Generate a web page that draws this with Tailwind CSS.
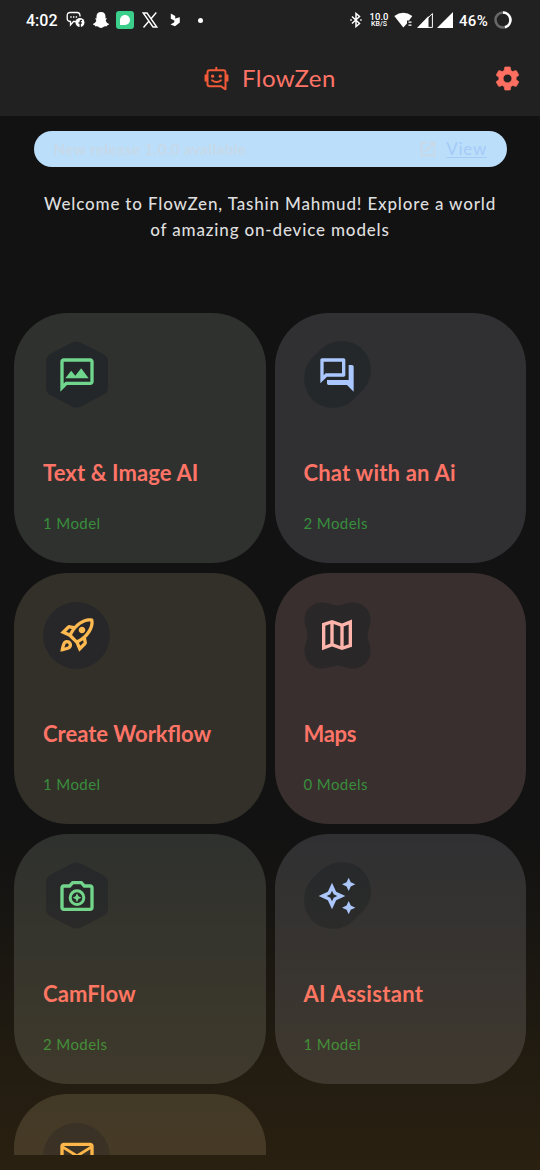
<!DOCTYPE html>
<html lang="en">
<head>
<meta charset="utf-8">
<meta name="viewport" content="width=device-width, initial-scale=1">
<title>FlowZen</title>
<script src="https://cdn.jsdelivr.net/npm/@tailwindcss/browser@4"></script>
</head>
<body class="bg-[#121212] font-[Lato,sans-serif]">
<svg width="0" height="0" class="absolute">
  <defs>
    <symbol id="hex" viewBox="0 0 67 67"><path d="M28 2.200Q33.500-1.400 39 2.200L60 13Q65 15.500 65 20V47Q65 51.500 60 54L39 65Q33.500 68 28 65L7 54Q3 51.500 3 47V20Q3 15.500 7 13Z"/></symbol>
    <symbol id="oval" viewBox="0 0 67 67"><path d="M16 9C23 2.500 30 .2 38 .2C55 .2 66.800 13 66.800 29C66.800 37 64 44 58 50L50 58C44 64 37 66.800 29 66.800C12 66.800 .2 54 .2 38C.2 29 3 22 9 16Z"/></symbol>
    <symbol id="disc" viewBox="0 0 67 67"><circle cx="33.500" cy="33.500" r="33.400"/></symbol>
    <symbol id="clover" viewBox="0 0 67 67"><path d="M18 .5C25 .5 28 3.500 33.500 3.500S42 .5 49 .5C59 .5 66.500 8 66.500 18C66.500 25 63.500 28 63.500 33.500S66.500 42 66.500 49C66.500 59 59 66.500 49 66.500C42 66.500 39 63.500 33.500 63.500S25 66.500 18 66.500C8 66.500 .5 59 .5 49C.5 42 3.500 39 3.500 33.500S.5 25 .5 18C.5 8 8 .5 18 .5Z"/></symbol>
  </defs>
</svg>
<div class="relative flex h-[1170px] w-[540px] flex-col overflow-hidden">
  <header class="flex h-[116px] shrink-0 flex-col bg-[#212121]">
    <div class="flex h-10 items-center pl-[26px] pr-[29px] font-[Roboto,sans-serif] text-white">
      <span class="w-[40px] pt-[2px] text-[16px] font-medium leading-none">4:02</span>
      <svg class="h-[18px] w-[19px] shrink-0" viewBox="0 0 19 18" fill="none" stroke="#fff" stroke-width="1.300"><path d="M10 10.500H7.500L4.500 14V10.500H4Q1.200 10.300 1.200 7.500V4.500Q1.200 1.500 4.200 1.500H11Q14 1.500 14 4.800V5.500"/><path d="M4.300 6h1.400M7 6h1.400M9.700 6h1.400" stroke-width="1.500"/><circle cx="14" cy="11.500" r="4.500" fill="#fff" stroke="none"/><path d="M14.200 16.500V10.500Q14.200 9.200 16 9.500M12.500 12h3.300" stroke="#212121"/></svg>
      <svg class="ml-[7px] h-[18px] w-[18px] shrink-0" viewBox="0 0 18 18" fill="#fff"><path d="M9 1C6 1 4.400 3 4.500 5.800L4.500 7.500 3.200 7.300C3 8.500 4.600 8.700 4.200 9.700 3.500 11.500 2.300 12.500 .8 13 1 14 2.500 14 3 14.400L3.400 15.500C5 15 6 15.500 7 16.300Q9 17.500 11 16.300C12 15.500 13 15 14.600 15.500L15 14.400C15.500 14 17 14 17.200 13 15.700 12.500 14.500 11.500 13.800 9.700 13.400 8.700 15 8.500 14.800 7.300L13.500 7.500 13.500 5.800C13.600 3 12 1 9 1Z"/></svg>
      <span class="ml-[6px] flex h-[18px] w-[18px] shrink-0 items-center justify-center rounded-[3px] bg-[#3bcf8b]"><span class="h-[10px] w-[10px] rounded-full rounded-bl-[3px] bg-white"></span></span>
      <svg class="ml-[8px] h-[16px] w-[16px] shrink-0" viewBox="0 0 16 16" fill="none" stroke="#fff" stroke-width="1.400"><path d="M1.200 1H5L14.800 15H11ZM14.300 .5L9 6.700M6.800 9.300L1.500 15.500"/></svg>
      <svg class="ml-[12px] h-[14px] w-[11px] shrink-0" viewBox="0 0 11 14" fill="#fff"><path d="M.8 .5L5.200 3V5.500L9.800 4.200V9.500L5 13.200L.5 11.500L4.300 9.300V7.500L.8 5.800Z"/></svg>
      <span class="ml-[17px] h-[5px] w-[5px] shrink-0 rounded-full bg-white"></span>
      <div class="ml-auto flex items-center">
        <svg class="h-[16px] w-[12px]" viewBox="0 0 12 16" fill="none" stroke="#fff" stroke-width="1.500"><path d="M2 4.500L9.500 11.500L6 14.500V1.500L9.500 4.500L2 11.500M.3 8h1.500M10.200 8h1.500"/></svg>
        <span class="ml-[7px] flex w-[20px] flex-col items-center font-medium"><span class="text-[9.500px] leading-[9px]">10.0</span><span class="text-[7px] leading-[7px]">KB/S</span></span>
        <svg class="ml-[5px] h-[16px] w-[19px]" viewBox="0 0 19 16" fill="#fff"><path d="M.3 4Q9.300-2.500 18.300 4L15 8.500H13V11.500L9.300 15.500Z"/><path d="M14.500 9.500h3v1.300h-3zM14.500 12.500h3v1.300h-3z"/></svg>
        <svg class="ml-[4px] h-[16px] w-[16px]" viewBox="0 0 16 16"><path d="M0 16L11.500 4V16Z" fill="#fff"/><path d="M1.500 15.400L15.400 1.500V15.400Z" fill="none" stroke="#fff"/></svg>
        <svg class="ml-[4px] h-[16px] w-[16px]" viewBox="0 0 16 16"><path d="M0 16L16 0V16Z" fill="#fff"/></svg>
        <span class="ml-[6px] w-[31px] pt-[2px] text-[15px] font-medium leading-none tracking-[0.300px]">46%</span>
        <svg class="ml-[4px] -mr-[1px] h-[18px] w-[18px]" viewBox="0 0 18 18" fill="none" stroke-width="2.600"><circle cx="9" cy="9" r="7.500" stroke="#686868"/><path d="M9 1.500A7.500 7.500 0 0 1 11 16.200" stroke="#fff"/></svg>
      </div>
    </div>
    <div class="flex h-[76px] items-center pl-[204px] pr-[19px]">
      <svg class="h-[25px] w-[25px] shrink-0" viewBox="0 0 25 25" fill="none" stroke="#f15a38" stroke-width="2" stroke-linejoin="round" stroke-linecap="round"><path d="M12.300 4V1.700M5.500 4.300H19.500Q21.500 4.300 21.500 6.300V23.300L16.800 20.200H5.500Q3.500 20.200 3.500 18.200V6.300Q3.500 4.300 5.500 4.300Z"/><path d="M1.800 9.500V14.500M23.200 9.500V14.500" stroke-width="2.500"/><path d="M8 14.300Q12.500 17.800 17 14.300" stroke-width="1.800"/><g fill="#f15a38" stroke="none"><circle cx="8.600" cy="10.200" r="1.600"/><circle cx="16.300" cy="10.200" r="1.600"/></g></svg>
      <h1 class="-mt-[1px] ml-[13px] whitespace-nowrap text-[24px] leading-none tracking-[0.450px] text-[#ff7467]">FlowZen</h1>
      <svg class="ml-auto mt-[1px] -mr-[1px] h-[29px] w-[29px]" viewBox="0 0 24 24" fill="#ff6f61"><path stroke="#ff6f61" stroke-width=".5" d="M19.140 12.940c.04-.3.06-.61.06-.94 0-.32-.02-.64-.07-.94l2.030-1.580c.18-.14.23-.41.12-.61l-1.920-3.320c-.12-.22-.37-.29-.59-.22l-2.390.96c-.5-.38-1.030-.7-1.620-.94l-.36-2.540c-.04-.24-.24-.41-.48-.41h-3.840c-.24 0-.43.17-.47.41l-.36 2.540c-.59.24-1.130.57-1.620.94l-2.390-.96c-.22-.08-.47 0-.59.22L2.740 8.870c-.12.21-.08.47.12.61l2.030 1.580c-.05.3-.09.63-.09.94s.02.64.07.94l-2.030 1.580c-.18.14-.23.41-.12.61l1.920 3.320c.12.22.37.29.59.22l2.390-.96c.5.38 1.030.7 1.620.94l.36 2.540c.05.24.24.41.48.41h3.840c.24 0 .44-.17.47-.41l.36-2.540c.59-.24 1.130-.56 1.620-.94l2.390.96c.22.08.47 0 .59-.22l1.920-3.320c.12-.22.07-.47-.12-.61l-2.010-1.580zM12 15.600c-1.980 0-3.600-1.620-3.600-3.600s1.620-3.600 3.600-3.600 3.600 1.620 3.600 3.600-1.620 3.600-3.600 3.600z"/></svg>
    </div>
  </header>

  <div class="ml-[33.500px] mt-[15px] flex h-[36px] w-[473px] shrink-0 items-center rounded-full bg-[#bbdefb] pl-[20px] pr-[19.500px]">
    <span class="whitespace-nowrap text-[15px] font-bold tracking-[0.450px] text-[#c6d9e8]">New release 1.0.0 available</span>
    <svg class="ml-auto h-[16px] w-[16px]" viewBox="0 0 16 16" fill="none" stroke="#cbd8e2" stroke-width="1.700"><path d="M7 1.500H1.500V14.500H14.500V9M9.500 1.500H14.500V6.500M14 2L5 11"/></svg>
    <span class="ml-[10px] text-[17px] tracking-[0.700px] text-[#a5cbf8] underline underline-offset-2">View</span>
  </div>

  <div class="mt-[24px] flex h-[52px] shrink-0 flex-col items-center whitespace-nowrap text-[17px] font-medium leading-[26px] text-[#dedede]">
    <p class="tracking-[0.840px]">Welcome to FlowZen, Tashin Mahmud! Explore a world</p>
    <p class="tracking-[0.840px]">of amazing on-device models</p>
  </div>

  <main class="mt-[69.500px] grid h-[842.500px] shrink-0 grid-cols-[251.500px_250.500px] auto-rows-[250.500px] gap-x-[9.500px] gap-y-[10px] overflow-hidden pl-[14px]">
    <section class="flex flex-col rounded-[54px] bg-[#2f312e] px-[29px] pt-[28.500px]">
      <div class="grid h-[67px] w-[67px] place-items-center"><svg class="col-start-1 row-start-1 h-[67px] w-[67px]" fill="#24272a"><use href="#hex"/></svg><svg class="col-start-1 row-start-1 h-10 w-10" viewBox="0 0 24 24" fill="#70d68d"><path d="M20 2H4c-1.100 0-1.990.9-1.990 2L2 22l4-4h14c1.100 0 2-.9 2-2V4c0-1.100-.9-2-2-2zm0 14H5.170L4 17.170V4h16v12zM5 14l3.500-4.500 2.500 3.010L14.500 8l4.500 6z"/></svg></div>
      <h2 class="mt-[50px] whitespace-nowrap text-[22px] font-bold leading-[30px] tracking-[0.100px] text-[#ff7467]">Text &amp; Image AI</h2>
      <p class="mt-[25px] text-[15px] leading-[20px] tracking-[0.400px] text-[#388e3c]">1 Model</p>
    </section>
    <section class="flex flex-col rounded-[54px] bg-[#303032] px-[28.500px] pt-[28.500px]">
      <div class="grid h-[67px] w-[67px] place-items-center"><svg class="col-start-1 row-start-1 h-[67px] w-[67px]" fill="#25282b"><use href="#oval"/></svg><svg class="col-start-1 row-start-1 h-10 w-10" viewBox="0 0 24 24" fill="#aac7ff"><path d="M15 4v7H5.170L4 12.170V4h11m1-2H3c-.55 0-1 .45-1 1v14l4-4h10c.55 0 1-.45 1-1V3c0-.55-.45-1-1-1zm5 4h-2v9H6v2c0 .55.45 1 1 1h11l4 4V7c0-.55-.45-1-1-1z"/></svg></div>
      <h2 class="mt-[50px] whitespace-nowrap text-[22px] font-bold leading-[30px] tracking-[0.200px] text-[#ff7467]">Chat with an Ai</h2>
      <p class="mt-[25px] text-[15px] leading-[20px] tracking-[0.400px] text-[#388e3c]">2 Models</p>
    </section>
    <section class="flex flex-col rounded-[54px] bg-[#33302a] px-[29px] pt-[28.500px]">
      <div class="grid h-[67px] w-[67px] place-items-center"><svg class="col-start-1 row-start-1 h-[67px] w-[67px]" fill="#272729"><use href="#disc"/></svg><svg class="col-start-1 row-start-1 h-10 w-10" viewBox="0 0 24 24" fill="#ffb951"><path d="M6 15c-.83 0-1.580.34-2.120.88C2.700 17.060 2 22 2 22s4.940-.7 6.120-1.880A2.996 2.996 0 0 0 6 15zm.71 3.710c-.28.28-2.170.76-2.170.76s.47-1.880.76-2.170c.17-.19.42-.3.7-.3a1.003 1.003 0 0 1 .71 1.710zm10.710-5.060c6.360-6.360 4.240-11.310 4.240-11.310S16.710.22 10.350 6.580l-2.490-.5a2.030 2.030 0 0 0-1.810.55L2 10.690l5 2.140L11.170 17l2.140 5 4.050-4.050c.47-.47.68-1.150.55-1.810l-.49-2.490zM7.410 10.830l-1.910-.82 1.970-1.970 1.440.29c-.57.83-1.080 1.700-1.500 2.500zm6.580 7.670-.82-1.910c.8-.42 1.670-.93 2.490-1.500l.29 1.440-1.960 1.970zM16 12.240c-1.320 1.320-3.380 2.400-4.040 2.730l-2.930-2.930c.32-.65 1.400-2.710 2.730-4.040 4.680-4.680 8.230-3.990 8.230-3.990s.69 3.550-3.990 8.230zM15 11c1.100 0 2-.9 2-2s-.9-2-2-2-2 .9-2 2 .9 2 2 2z"/></svg></div>
      <h2 class="mt-[50px] whitespace-nowrap text-[22px] font-bold leading-[30px] text-[#ff7467]">Create Workflow</h2>
      <p class="mt-[25px] text-[15px] leading-[20px] tracking-[0.400px] text-[#388e3c]">1 Model</p>
    </section>
    <section class="flex flex-col rounded-[54px] bg-[#382f2e] px-[28.500px] pt-[28.500px]">
      <div class="grid h-[67px] w-[67px] place-items-center"><svg class="col-start-1 row-start-1 h-[67px] w-[67px]" fill="#2a2728"><use href="#clover"/></svg><svg class="col-start-1 row-start-1 h-10 w-10" viewBox="0 0 24 24" fill="#ffb4ab" fill-rule="evenodd"><path d="M15 5.100 9 3 3 5.020v16.200l6-2.330 6 2.100 6-2.010V2.770zM5 6.460l3-1.010v11.700l-3 1.160zM10 5.470l4 1.400v11.660l-4-1.400zM19 17.540l-3 1.010V6.860l3-1.160z"/></svg></div>
      <h2 class="mt-[50px] whitespace-nowrap text-[22px] font-bold leading-[30px] tracking-[-0.300px] text-[#ff7467]">Maps</h2>
      <p class="mt-[25px] text-[15px] leading-[20px] tracking-[0.400px] text-[#388e3c]">0 Models</p>
    </section>
    <section class="flex flex-col rounded-[54px] bg-[#2f312e] px-[29px] pt-[28.500px]">
      <div class="grid h-[67px] w-[67px] place-items-center"><svg class="col-start-1 row-start-1 h-[67px] w-[67px]" fill="#24272a"><use href="#hex"/></svg><svg class="col-start-1 row-start-1 h-10 w-10" viewBox="0 0 24 24" fill="#70d68d"><path d="M20 5h-3.170L15 3H9L7.170 5H4c-1.100 0-2 .9-2 2v12c0 1.100.9 2 2 2h16c1.100 0 2-.9 2-2V7c0-1.100-.9-2-2-2zm0 14H4V7h4.050l1.830-2h4.240l1.830 2H20v12z"/><circle cx="12" cy="13" r="4.100" fill="none" stroke="#70d68d" stroke-width="1.800"/><path d="M12 10.300l.85 1.850 1.850.85-1.850.85L12 15.700l-.85-1.850L9.300 13l1.850-.85z"/></svg></div>
      <h2 class="mt-[50px] whitespace-nowrap text-[22px] font-bold leading-[30px] tracking-[0.150px] text-[#ff7467]">CamFlow</h2>
      <p class="mt-[25px] text-[15px] leading-[20px] tracking-[0.400px] text-[#388e3c]">2 Models</p>
    </section>
    <section class="flex flex-col rounded-[54px] bg-[#303032] px-[28.500px] pt-[28.500px]">
      <div class="grid h-[67px] w-[67px] place-items-center"><svg class="col-start-1 row-start-1 h-[67px] w-[67px]" fill="#25282b"><use href="#oval"/></svg><svg class="col-start-1 row-start-1 h-10 w-10" viewBox="0 0 24 24" fill="#aac7ff"><path d="M19 9l1.250-2.750L23 5l-2.750-1.250L19 1l-1.250 2.750L15 5l2.750 1.250zm0 6l-1.250 2.750L15 19l2.750 1.250L19 23l1.250-2.750L23 19l-2.750-1.250zM11.500 9.500L9 4 6.500 9.500 1 12l5.500 2.500L9 20l2.500-5.500L17 12zm-1.510 3.490L9 15.170l-.99-2.180L5.830 12l2.180-.99L9 8.830l.99 2.180 2.180.99z"/></svg></div>
      <h2 class="mt-[50px] whitespace-nowrap text-[22px] font-bold leading-[30px] tracking-[0.300px] text-[#ff7467]">AI Assistant</h2>
      <p class="mt-[25px] text-[15px] leading-[20px] tracking-[0.400px] text-[#388e3c]">1 Model</p>
    </section>
    <section class="flex flex-col rounded-[54px] bg-[#33302a] px-[29px] pt-[28.500px]">
      <div class="grid h-[67px] w-[67px] place-items-center"><svg class="col-start-1 row-start-1 h-[67px] w-[67px]" fill="#272729"><use href="#disc"/></svg><svg class="col-start-1 row-start-1 h-10 w-10" viewBox="0 0 24 24" fill="#ffb951"><path d="M22 6c0-1.100-.9-2-2-2H4c-1.100 0-2 .9-2 2v12c0 1.100.9 2 2 2h16c1.100 0 2-.9 2-2V6zm-2 0l-8 5-8-5h16zm0 12H4V8l8 5 8-5v10z"/></svg></div>
    </section>
  </main>
  <div class="pointer-events-none absolute inset-x-0 bottom-0 h-[335px] bg-linear-to-b from-[#ffa000]/0 to-[#ffa000]/10"></div>
</div>
</body>
</html>
